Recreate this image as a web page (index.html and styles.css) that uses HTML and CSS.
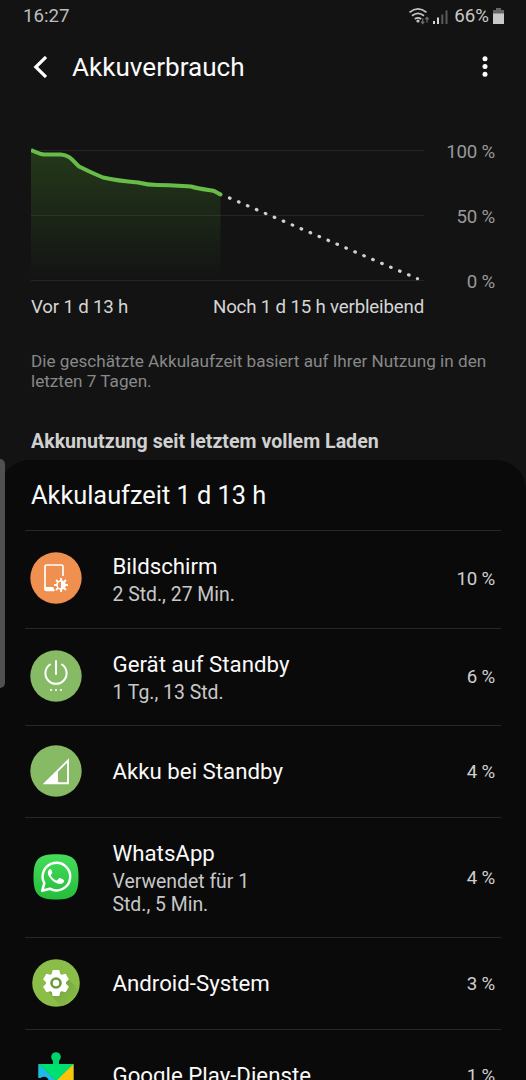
FILE: index.html
```html
<!DOCTYPE html>
<html lang="de">
<head>
<meta charset="utf-8">
<title>Akkuverbrauch</title>
<link rel="stylesheet" href="styles.css">
</head>
<body>
<div class="screen">
  <header class="status">
    <span class="clock">16:27</span>
    <span class="indicators">
      <svg class="signal" width="41" height="20" viewBox="0 0 41 20">
        <g fill="none" stroke="#c4c4c4" stroke-width="1.8">
          <path d="M1.500 6.400Q10 -.6 18.500 6.400"/><path d="M4 9.800Q10 5 16 9.800"/><path d="M6.800 13Q10 10.600 13.200 13"/>
        </g>
        <circle cx="10" cy="15" r="1.600" fill="#c4c4c4"/>
        <path d="M14.700 12.500v5m-1.600-1.800 1.600 1.800 1.600-1.800M19 16.500v-5m-1.600 1.800 1.600-1.800 1.600 1.800" fill="none" stroke="#6a6a6a" stroke-width="1.300"/>
        <path d="M26 18v-3M30 18v-6.500" stroke="#d8d8d8" stroke-width="2"/>
        <path d="M34.300 18V8.500M38.500 18V4.500" stroke="#5a5a5a" stroke-width="2"/>
      </svg>
      <span class="level">66%</span>
      <svg class="battery" width="11" height="16" viewBox="0 0 11 16"><path d="M3 0h5v2h3v4H0V2h3z" fill="#666"/><path d="M0 5.500h11V16H0z" fill="#c9c9c9"/></svg>
    </span>
  </header>
  <div class="toolbar">
    <svg class="back" width="14" height="22" viewBox="0 0 14 22"><path d="M13 1 2.800 11 13 21" fill="none" stroke="#fff" stroke-width="3.200"/></svg>
    <h1 class="title">Akkuverbrauch</h1>
    <svg class="more" width="6" height="22" viewBox="0 0 6 22" fill="#fff"><circle cx="3" cy="2.700" r="2.500"/><circle cx="3" cy="10.500" r="2.500"/><circle cx="3" cy="18.300" r="2.500"/></svg>
  </div>
  <section class="chart">
    <div class="plot">
      <svg width="395" height="140" viewBox="0 0 395 140">
        <defs><linearGradient id="fade" x1="0" y1="0" x2="0" y2="1"><stop offset="0" stop-color="#60c030" stop-opacity=".22"/><stop offset="1" stop-color="#60c040" stop-opacity="0"/></linearGradient></defs>
        <path d="M0 8.500H393M0 73.500H393M0 138.500H393" stroke="#252525"/>
        <path d="M0 8C5 10 8 12.300 13 12.500H30C39 13 42 19 48 24.500C55 28 61 31 72 35.500C85 38.500 95 39.500 107 40.500C115 42.500 119 43 126 43C143 43 150 44 160 44.500C168 47 178 48 183 49L189.500 52.500V138H0Z" fill="url(#fade)"/>
        <path d="M0 8C5 10 8 12.300 13 12.500H30C39 13 42 19 48 24.500C55 28 61 31 72 35.500C85 38.500 95 39.500 107 40.500C115 42.500 119 43 126 43C143 43 150 44 160 44.500C168 47 178 48 183 49L189.500 52.500" fill="none" stroke="#67bd48" stroke-width="4"/>
        <circle cx="189.500" cy="52.500" r="2" fill="#67bd48"/>
        <path d="M198.500 56L386.500 136.700" stroke="#cbd2d5" stroke-width="3.200" stroke-linecap="round" stroke-dasharray="0.600 9.140"/>
      </svg>
      <div class="range"><span>Vor 1 d 13 h</span><span>Noch 1 d 15 h verbleibend</span></div>
    </div>
    <div class="scale"><span>100 %</span><span>50 %</span><span>0 %</span></div>
  </section>
  <p class="note">Die geschätzte Akkulaufzeit basiert auf Ihrer Nutzung in den letzten 7 Tagen.</p>
  <h2 class="section">Akkunutzung seit letztem vollem Laden</h2>
  <main class="card">
    <h3 class="heading">Akkulaufzeit 1 d 13 h</h3>
    <div class="row two">
      <svg class="icon" viewBox="0 0 52 52"><circle cx="26" cy="26" r="25.700" fill="#ef8f50"/>
        <path d="M33 24V14.500q0-1.500-1.500-1.500h-15q-1.500 0-1.500 1.500V37q0 1.500 1.500 1.500H24" fill="none" stroke="#fff" stroke-width="1.700"/>
        <path d="M15 35h8l2 4h-9q-1 0-1-1z" fill="#fff"/>
        <path d="M31 26v14M24 33h14M26 28l10 10M36 28L26 38" stroke="#fff" stroke-width="1.800"/>
        <circle cx="31" cy="33" r="4.800" fill="#fff"/><path d="M31 29.800a3.200 3.200 0 0 0 0 6.400z" fill="#ef8f50"/></svg>
      <div class="label"><b>Bildschirm</b><small>2 Std., 27 Min.</small></div><span class="value">10 %</span>
    </div>
    <div class="row two">
      <svg class="icon" viewBox="0 0 52 52"><circle cx="26" cy="26" r="25.700" fill="#86ba65"/>
        <g fill="none" stroke="#fff" stroke-width="2" stroke-linecap="round"><path d="M20 14.500a10.600 10.600 0 1 0 12 0M26 11v13"/></g>
        <g fill="#fff"><circle cx="21" cy="40" r="1.100"/><circle cx="26" cy="40" r="1.100"/><circle cx="31" cy="40" r="1.100"/></g></svg>
      <div class="label"><b>Gerät auf Standby</b><small>1 Tg., 13 Std.</small></div><span class="value">6 %</span>
    </div>
    <div class="row single">
      <svg class="icon" viewBox="0 0 52 52"><circle cx="26" cy="26" r="25.700" fill="#86ba65"/>
        <path d="M15 38.200H38V15.500Z" fill="none" stroke="#fff" stroke-width="1.900"/><path d="M14 39 28 25v14z" fill="#fff"/></svg>
      <div class="label"><b>Akku bei Standby</b></div><span class="value">4 %</span>
    </div>
    <div class="row three">
      <svg class="icon" viewBox="0 0 52 52"><defs><linearGradient id="wa" x1="0" y1="0" x2="0" y2="1"><stop stop-color="#45dc59"/><stop offset="1" stop-color="#24bd3c"/></linearGradient></defs>
        <path d="M26 3.300C43.500 3.300 48.500 8.300 48.500 26S43.500 48.500 26 48.500 3.500 43.500 3.500 26 8.500 3.300 26 3.300Z" fill="url(#wa)"/>
        <path d="M12.200 39.800 14.300 32.200A13.800 13.800 0 1 1 19.800 37.700Z" fill="none" stroke="#fff" stroke-width="2.500" stroke-linejoin="round"/>
        <path d="M21.200 18.600c-.6-.8-1.500-.6-2.200.1-2 2.100-1 5 .4 7.200 2.200 3.300 5.100 5.700 8.800 6.900 2.600.8 4.600-.1 5.600-1.700.6-1.100.5-2-.3-2.400l-3.300-1.600c-.6-.3-1.100-.1-1.500.4l-1.200 1.500c-.4.500-.8.500-1.500.2-2.200-1-3.800-2.400-5-4.500-.3-.5-.2-.9.200-1.300l.9-1.100c.3-.4.300-.8.100-1.300Z" fill="#fff"/></svg>
      <div class="label"><b>WhatsApp</b><small>Verwendet für 1<br>Std., 5 Min.</small></div><span class="value">4 %</span>
    </div>
    <div class="row single">
      <svg class="icon" viewBox="0 0 52 52"><defs><clipPath id="disc"><circle cx="26" cy="26" r="23.800"/></clipPath><linearGradient id="shade" x1="0" y1="0" x2="1" y2="1"><stop offset=".2" stop-color="#71a33e"/><stop offset=".8" stop-color="#8bbd49"/></linearGradient></defs><circle cx="26" cy="26" r="23.800" fill="#8bbd49"/>
        <path d="M18 34l19-13 15 15v16H33z" fill="url(#shade)" clip-path="url(#disc)"/>
        <g fill="#fff"><circle cx="26" cy="26" r="10"/><path id="tooth" d="M21.500 18l1.200-5h6.600l1.200 5v16l-1.200 5h-6.600l-1.200-5z"/><use href="#tooth" transform="rotate(60 26 26)"/><use href="#tooth" transform="rotate(120 26 26)"/></g>
        <circle cx="26" cy="26" r="4.500" fill="#fff" stroke="#699b39" stroke-width="2.600"/></svg>
      <div class="label"><b>Android-System</b></div><span class="value">3 %</span>
    </div>
    <div class="row single">
      <svg class="icon" viewBox="0 0 52 52">
        <path d="M8.500 15h35v37h-35z" fill="#00d56b"/><circle cx="26" cy="8" r="4.800" fill="#00d56b"/><path d="M23 10h6v6h-6z" fill="#00d56b"/>
        <path d="M8.500 15 26 32 8.500 50z" fill="#20b9ed"/><path d="M43.500 15 26 32l17.500 18z" fill="#ffc20a"/><path d="M11 15h32L26 31z" fill="#00df72"/><circle cx="14" cy="32.500" r="4.800" fill="#0a0a0a"/><path d="M8 29h6v6H8z" fill="#0a0a0a"/></svg>
      <div class="label"><b>Google Play-Dienste</b></div><span class="value">1 %</span>
    </div>
  </main>
  <div class="edge"></div>
</div>
</body>
</html>
```
FILE: styles.css
```css
* { box-sizing: border-box; }
body { margin: 0; background: #131313; font-family: Roboto, sans-serif; color: #fafafa; }
h1, h2, h3, p { margin: 0; font-weight: 400; }
svg { display: block; flex: none; }
.screen { position: relative; height: 1080px; overflow: hidden; display: flex; flex-direction: column; }
.status { height: 32px; padding: 0 22px 0 23px; display: flex; justify-content: space-between; align-items: center; font-size: 18.700px; color: #bdbdbd; flex: none; }
.indicators { display: flex; align-items: center; }
.level { margin: 0 4px 0 5px; color: #c8c8c8; }
.toolbar { height: 70px; padding: 0 38px 0 33px; display: flex; align-items: center; flex: none; }
.back { margin-top: -1px; }
.title { margin-left: 25px; flex: 1; font-size: 26.100px; }
.chart { height: 244px; padding: 40px 31px 0; display: flex; justify-content: space-between; flex: none; }
.plot { width: 393px; }
.range { display: flex; justify-content: space-between; margin-top: 13px; font-size: 18.700px; line-height: 24px; letter-spacing: -.18px; color: #d5d5d5; white-space: nowrap; }
.scale { height: 154px; margin-top: -2px; display: flex; flex-direction: column; justify-content: space-between; text-align: right; font-size: 18.700px; letter-spacing: -.2px; line-height: 24px; color: #999; }
.note { height: 83px; padding: 6px 31px 0; font-size: 17.150px; line-height: 19.500px; color: #888; flex: none; }
.section { height: 31px; padding: 0 31px; font-size: 19.600px; line-height: 25px; font-weight: 700; color: #d0d0d0; flex: none; white-space: nowrap; }
.card { height: 640px; padding: 0 25px; background: #0a0a0a; border-radius: 30px 30px 0 0; flex: none; }
.heading { height: 70px; padding: 0 6px; font-size: 25.350px; line-height: 70px; }
.row { display: flex; align-items: center; border-top: 1px solid #272727; padding: 0 6px 2px 5px; }
.two { height: 97.500px; }
.single { height: 92px; }
.three { height: 120px; }
.icon { width: 52px; height: 52px; }
.label { flex: 1; margin-left: 30.500px; }
.label b, .label small { display: block; font-weight: 400; }
.label b { font-size: 22.250px; line-height: 28px; }
.label small { font-size: 19.400px; line-height: 23px; margin-top: 3px; color: #c8c8c8; }
.two .label, .three .label { padding-top: 2px; }
.value { padding-top: 2px; font-size: 18.700px; letter-spacing: -.2px; color: #cfcfcf; }
.edge { position: absolute; left: 0; top: 459px; width: 5px; height: 229px; background: #505050; border-radius: 0 5px 5px 0; }
```
